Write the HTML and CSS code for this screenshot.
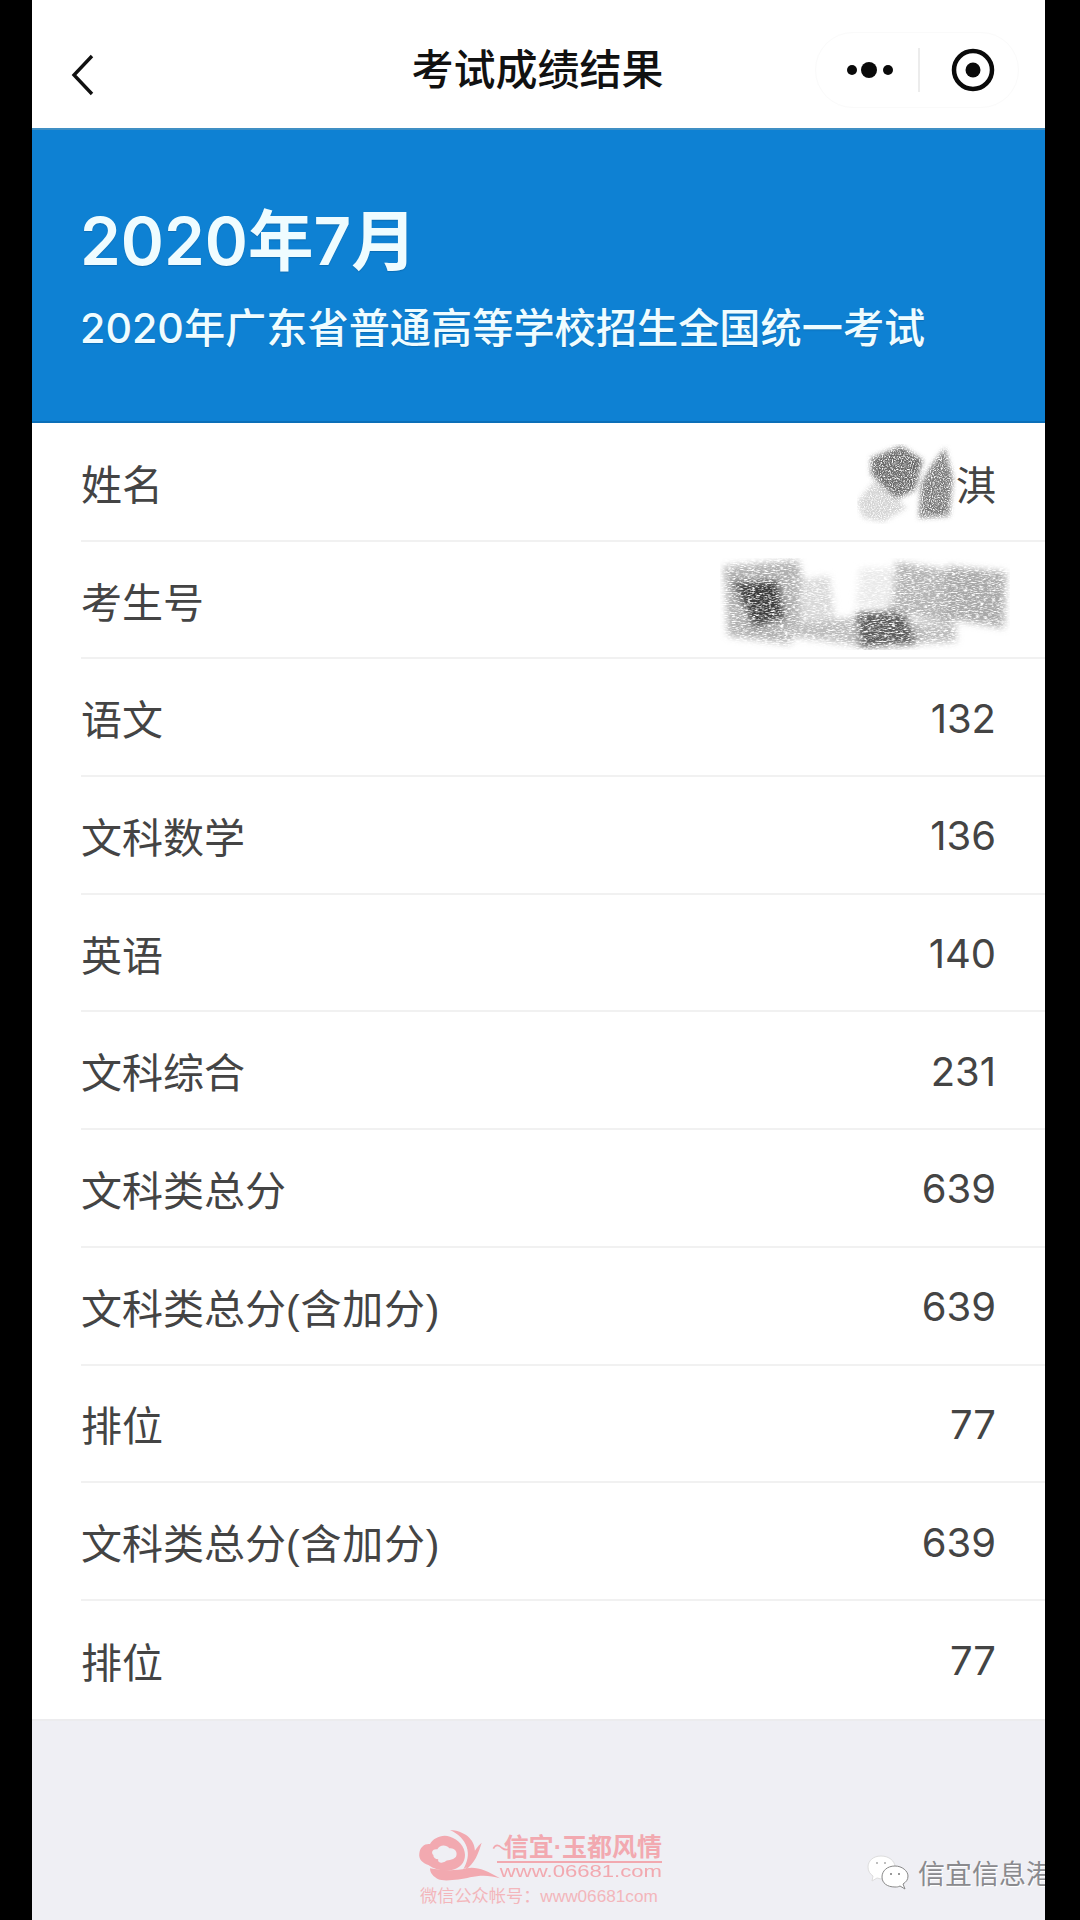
FILE: index.html
```html
<!DOCTYPE html>
<html lang="zh-CN">
<head>
  <meta charset="UTF-8" />
  <title>考试成绩结果</title>
  <link rel="stylesheet" href="styles.css">
</head>
<body>
  <svg class="defs" width="0" height="0">
    <filter id="pencil" x="-10%" y="-10%" width="120%" height="120%">
      <feGaussianBlur in="SourceGraphic" stdDeviation="3.5" result="soft" />
      <feTurbulence type="fractalNoise" baseFrequency="0.25 1.1" numOctaves="3" seed="4" />
      <feColorMatrix values="0 0 0 0 0  0 0 0 0 0  0 0 0 0 0  0 0 0 3 -0.7" result="grain" />
      <feComposite in="soft" in2="grain" operator="in" />
      <feGaussianBlur stdDeviation="0.4" />
    </filter>
    <filter id="pencil-name" x="-10%" y="-10%" width="120%" height="120%">
      <feGaussianBlur in="SourceGraphic" stdDeviation="2.5" result="soft" />
      <feTurbulence type="fractalNoise" baseFrequency="0.9 0.9" numOctaves="2" seed="9" />
      <feColorMatrix values="0 0 0 0 0  0 0 0 0 0  0 0 0 0 0  0 0 0 3 -0.7" result="grain" />
      <feComposite in="soft" in2="grain" operator="in" />
      <feGaussianBlur stdDeviation="0.4" />
    </filter>
  </svg>

  <div class="phone">
    <div class="nav">
      <svg class="back" width="24" height="42" viewBox="0 0 24 42">
        <path d="M21 2 L3 21 L21 40" fill="none" stroke="#111" stroke-width="3.4" />
      </svg>
      <div class="nav-title">考试成绩结果</div>
      <div class="capsule">
        <svg width="54" height="18" viewBox="0 0 54 18">
          <circle cx="5" cy="9" r="5" fill="#0a0a0a" />
          <circle cx="22" cy="9" r="8" fill="#0a0a0a" />
          <circle cx="41" cy="9" r="5" fill="#0a0a0a" />
        </svg>
        <span class="capsule-line"></span>
        <svg width="44" height="44" viewBox="0 0 44 44">
          <circle cx="22" cy="22" r="19" fill="none" stroke="#0a0a0a" stroke-width="4.5" />
          <circle cx="22" cy="22" r="7.5" fill="#0a0a0a" />
        </svg>
      </div>
    </div>

    <div class="banner">
      <div class="banner-date">2020年7月</div>
      <div class="banner-sub">2020年广东省普通高等学校招生全国统一考试</div>
    </div>

    <div class="list">
      <div class="row"><span>姓名</span><span class="val">淇</span></div>
      <div class="row"><span>考生号</span><span class="val"></span></div>
      <div class="row"><span>语文</span><span class="val">132</span></div>
      <div class="row"><span>文科数学</span><span class="val">136</span></div>
      <div class="row"><span>英语</span><span class="val">140</span></div>
      <div class="row"><span>文科综合</span><span class="val">231</span></div>
      <div class="row"><span>文科类总分</span><span class="val">639</span></div>
      <div class="row"><span>文科类总分<span class="note">(含加分)</span></span><span class="val">639</span></div>
      <div class="row"><span>排位</span><span class="val">77</span></div>
      <div class="row"><span>文科类总分<span class="note">(含加分)</span></span><span class="val">639</span></div>
      <div class="row"><span>排位</span><span class="val">77</span></div>
    </div>

    <div class="foot"></div>

    <!-- scribbles over name and exam number -->
    <svg class="scribble scribble-name" width="100" height="80" viewBox="0 0 100 80">
      <g filter="url(#pencil-name)">
        <path d="M14 14 L44 2 L66 16 L58 46 L38 56 L14 30 Z" fill="#6a6a6a" />
        <path d="M64 40 L74 22 L88 4 L96 34 L92 72 L62 74 Z" fill="#7a7a7a" />
        <path d="M0 58 L18 36 L50 64 L26 78 L6 74 Z" fill="#d4d4d4" />
      </g>
    </svg>
    <svg class="scribble scribble-id" width="290" height="92" viewBox="0 0 290 92">
      <g filter="url(#pencil)">
        <path d="M4 8 L78 2 L90 50 L70 86 L8 78 Z" fill="#b0b0b0" />
        <path d="M12 24 L58 22 L66 60 L34 70 Z" fill="#3c3c3c" />
        <path d="M80 22 L110 18 L116 70 L80 74 Z" fill="#d8d8d8" />
        <path d="M70 66 L150 58 L236 68 L236 84 L140 88 L70 78 Z" fill="#bbb" />
        <path d="M136 54 L184 52 L198 86 L140 90 Z" fill="#5c5c5c" />
        <path d="M176 4 L230 12 L234 68 L166 52 Z" fill="#b4b4b4" />
        <path d="M228 8 L286 14 L284 70 L224 60 Z" fill="#a8a8a8" />
        <path d="M140 10 L176 10 L172 50 L136 48 Z" fill="#eaeaea" />
      </g>
    </svg>

    <!-- site watermark -->
    <div class="mark">
      <svg class="mark-logo" width="100" height="70" viewBox="0 0 300 210">
        <path fill="#f2a9b0" fill-rule="evenodd" d="M28 100 C30 80 45 70 60 72 C70 55 95 42 120 50 C145 58 165 80 165 105 C165 128 150 145 125 150 C105 155 75 150 55 135 C38 130 25 118 28 100 Z M70 105 C62 98 68 85 82 88 C88 75 108 72 118 85 C132 82 145 95 138 110 C128 122 110 118 105 125 L95 128 C88 130 82 122 85 118 C75 118 70 112 70 105 Z" />
        <path fill="#f2a9b0" d="M60 145 C90 150 130 155 170 145 C195 138 230 150 270 175 C240 165 210 165 180 172 C150 180 100 185 85 178 C70 170 60 160 60 145 Z" />
        <path fill="#f2a9b0" d="M120 30 C160 32 195 55 195 95 C195 115 180 135 160 148 C172 125 178 105 170 80 C162 58 145 42 120 30 Z" />
        <path fill="#f2a9b0" d="M215 68 C205 100 195 130 165 150 C180 120 190 90 215 68 Z" />
        <path fill="none" stroke="#f2a9b0" stroke-width="5" d="M250 86 C256 72 266 74 276 84 C284 90 292 90 298 86" />
      </svg>
      <div class="mark-text">
        <div class="mark-name">信宜·玉都风情</div>
        <div class="mark-url">www.06681.com</div>
      </div>
      <div class="mark-sub">微信公众帐号：www06681com</div>
    </div>

    <!-- wechat account tag -->
    <div class="tag">
      <svg width="42" height="36" viewBox="0 0 42 36">
        <path d="M14 1 C6 1 1 6 1 12 C1 16 3 19 6 21 L5 26 L10 23 C11 23 13 24 15 24 C24 24 28 18 28 12 C28 6 22 1 14 1 Z" fill="#fff" stroke="#ddd" stroke-width="1" />
        <path d="M28 11 C20 11 15 16 15 22 C15 28 20 32 28 32 C30 32 31 32 33 31 L38 34 L36 29 C39 27 41 25 41 21 C41 16 35 11 28 11 Z" fill="#fff" stroke="#888" stroke-width="1" />
        <circle cx="24" cy="19" r="1" fill="#777" />
        <circle cx="32" cy="19" r="1" fill="#777" />
        <circle cx="10" cy="8" r="1" fill="#aaa" />
        <circle cx="18" cy="8" r="1" fill="#aaa" />
      </svg>
      <span class="tag-name">信宜信息港</span>
    </div>
  </div>
</body>
</html>
```

FILE: styles.css
```css
* {
  box-sizing: border-box;
  font-family: "Liberation Sans", "Noto Sans CJK SC", sans-serif;
}
html, body {
  margin: 0;
  height: 100%;
  background: #000;
}
body {
  padding-left: 32px;
  overflow: hidden;
}
.defs {
  position: absolute;
}
.phone {
  position: relative;
  width: 1013px;
  height: 1920px;
  background: #efeff4;
  display: flex;
  flex-direction: column;
  overflow: hidden;
}

.nav {
  position: relative;
  height: 128px;
  background: #fff;
  display: flex;
  align-items: center;
  justify-content: center;
  flex-shrink: 0;
}
.back {
  position: absolute;
  left: 39px;
  top: 54px;
}
.nav-title {
  font-size: 42px;
  font-weight: 500;
  color: #111;
  margin-left: -2px;
  margin-top: 4px;
}
.capsule {
  position: absolute;
  left: 783px;
  top: 32px;
  width: 204px;
  height: 76px;
  border: 1px solid #fafafa;
  border-radius: 38px;
  display: flex;
  align-items: center;
  padding-left: 31px;
}
.capsule-line {
  width: 2px;
  height: 44px;
  background: #ececec;
  margin: 0 31px 0 17px;
}

.banner {
  height: 295px;
  background: #0e81d3;
  border-top: 2px solid #3f8fc4;
  border-bottom: 2px solid #0b6fb8;
  padding: 72px 0 0 48px;
  color: #effcff;
  flex-shrink: 0;
  text-shadow: 0 1px 1px rgba(0, 50, 90, 0.25);
}
.banner-date {
  font-family: Inter, "Noto Sans CJK SC", sans-serif;
  font-size: 65.5px;
  line-height: 80px;
  font-weight: 600;
}
.banner-sub {
  font-family: Inter, "Noto Sans CJK SC", sans-serif;
  font-size: 41.2px;
  line-height: 50px;
  font-weight: 500;
  margin-top: 21px;
}

.list {
  background: #fff;
  padding-top: 1px;
  flex-shrink: 0;
}
.row {
  height: 117.7px;
  margin-left: 49px;
  padding: 0 49px 0 0;
  border-bottom: 2px solid #f1f1f1;
  display: flex;
  align-items: center;
  justify-content: space-between;
  font-size: 41px;
  color: #444;
}
.row:last-child {
  border-bottom: none;
}
.note {
  letter-spacing: 0.8px;
}
.val {
  font-family: Inter, "Noto Sans CJK SC", sans-serif;
  font-size: 40px;
  padding-top: 2px;
}
.foot {
  flex: 1;
  border-top: 2px solid #ececee;
}

.scribble {
  position: absolute;
}
.scribble-name {
  left: 825px;
  top: 444px;
}
.scribble-id {
  left: 688px;
  top: 558px;
}

.mark {
  position: absolute;
  left: 385px;
  top: 1828px;
  width: 250px;
  height: 80px;
}
.mark-logo {
  position: absolute;
  left: -7px;
  top: -8px;
  overflow: visible;
}
.mark-text {
  position: absolute;
  left: 80px;
  top: 5px;
  width: 165px;
  text-align: right;
}
.mark-name {
  font-size: 25px;
  line-height: 28px;
  font-weight: 700;
  color: #f2a9b0;
  border-bottom: 2px solid #f2a9b0;
  white-space: nowrap;
}
.mark-url {
  font-size: 17px;
  line-height: 18px;
  color: #f2a9b0;
  white-space: nowrap;
  transform: scaleX(1.3);
  transform-origin: right;
}
.mark-sub {
  position: absolute;
  left: 3px;
  top: 58px;
  font-size: 17.2px;
  line-height: 20px;
  color: #f3b6bb;
  white-space: nowrap;
}

.tag {
  position: absolute;
  left: 835px;
  top: 1853px;
  display: flex;
  align-items: center;
  gap: 9px;
  white-space: nowrap;
}
.tag-name {
  font-size: 27px;
  color: #8a8a8e;
  text-shadow: 1px 1px 0 #fff;
}
```
